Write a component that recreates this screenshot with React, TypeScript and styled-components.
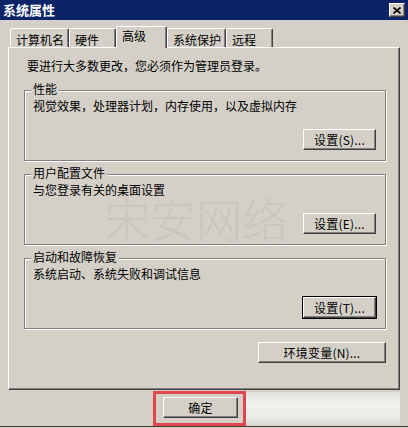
import React from "react";
import styled, { createGlobalStyle } from "styled-components";

const GlobalStyle = createGlobalStyle`
  html, body {
    margin: 0;
    padding: 0;
    background: #d4d0c8;
  }
  body {
    font-family: "Noto Sans CJK SC", "Noto Sans", sans-serif;
    font-size: 12px;
    color: #000;
  }
`;

const Window = styled.div`
  width: 408px;
  height: 428px;
  background: #d4d0c8;
  display: flex;
  flex-direction: column;
  overflow: hidden;
  box-sizing: border-box;
`;

const TitleBar = styled.div`
  height: 20px;
  background: #0b2468;
  display: flex;
  align-items: center;
  justify-content: space-between;
  padding: 0 3px 0 3px;
  flex-shrink: 0;
`;

const TitleText = styled.span`
  color: #fff;
  font-size: 13px;
  font-weight: 700;
  line-height: 20px;
`;

const CloseButton = styled.div`
  width: 16px;
  height: 14px;
  box-sizing: border-box;
  background: #d4d0c8;
  border-top: 1px solid #fff;
  border-left: 1px solid #fff;
  border-right: 1px solid #404040;
  border-bottom: 1px solid #404040;
  box-shadow: inset -1px -1px 0 #808080;
  display: flex;
  align-items: center;
  justify-content: center;
`;

const TabRow = styled.div`
  display: flex;
  align-items: flex-end;
  height: 21px;
  margin-top: 6px;
  padding-left: 10px;
  position: relative;
  z-index: 2;
`;

const Tab = styled.div<{ $w: number; $active?: boolean }>`
  width: ${(p) => p.$w}px;
  height: ${(p) => (p.$active ? 22 : 19)}px;
  margin-bottom: ${(p) => (p.$active ? -1 : 0)}px;
  box-sizing: border-box;
  padding: ${(p) => (p.$active ? "2px 0 0 5px" : "4px 0 0 5px")};
  background: #d4d0c8;
  border-top: 1px solid #fff;
  border-left: 1px solid #fff;
  border-right: 1px solid #404040;
  box-shadow: inset -1px 0 0 #808080;
  border-radius: 2px 2px 0 0;
  font-size: 12px;
  line-height: 14px;
  white-space: nowrap;
`;

const Panel = styled.div`
  position: relative;
  margin: 0 8px;
  height: 343px;
  box-sizing: border-box;
  border-top: 1px solid #fff;
  border-left: 1px solid #fff;
  border-right: 1px solid #404040;
  border-bottom: 1px solid #404040;
  box-shadow: inset -1px -1px 0 #808080;
  padding: 11px 13px 0 15px;
  display: flex;
  flex-direction: column;
  flex-shrink: 0;
`;

const Intro = styled.div`
  line-height: 14px;
  margin-left: 3px;
  white-space: nowrap;
`;

const Group = styled.div<{ $first?: boolean }>`
  position: relative;
  height: 71px;
  box-sizing: border-box;
  margin-top: ${(p) => (p.$first ? 17 : 13)}px;
  border: 1px solid #808080;
  box-shadow: 1px 1px 0 #fff, inset 1px 1px 0 #fff;
  padding: 8px 9px 0 8px;
  display: flex;
  flex-direction: column;
`;

const Legend = styled.span`
  position: absolute;
  top: -9px;
  left: 6px;
  padding: 0 2px;
  background: #d4d0c8;
  line-height: 14px;
  white-space: nowrap;
`;

const Desc = styled.div`
  line-height: 14px;
  white-space: nowrap;
`;

const ButtonRow = styled.div<{ $top: number }>`
  display: flex;
  justify-content: flex-end;
  margin-top: ${(p) => p.$top}px;
`;

const Button = styled.div<{ $w: number; $focused?: boolean }>`
  width: ${(p) => p.$w}px;
  height: 21px;
  box-sizing: border-box;
  background: #d4d0c8;
  border-top: 1px solid #fff;
  border-left: 1px solid #fff;
  border-right: 1px solid #404040;
  border-bottom: 1px solid #404040;
  box-shadow: inset -1px -1px 0 #808080
    ${(p) => (p.$focused ? ", 0 0 0 1px #000" : "")};
  display: flex;
  align-items: center;
  justify-content: center;
  font-size: 12px;
  line-height: 14px;
  white-space: nowrap;
  letter-spacing: 0.2px;
`;

const Watermark = styled.div`
  position: absolute;
  left: 95px;
  top: 146px;
  font-size: 46px;
  line-height: 46px;
  font-weight: 300;
  color: #cac6be;
  white-space: nowrap;
  pointer-events: none;
`;

const Footer = styled.div`
  height: 37px;
  box-sizing: border-box;
  border-bottom: 1px solid #404040;
  display: flex;
  align-items: flex-start;
  padding-left: 153px;
  flex-shrink: 0;
`;

const Highlight = styled.div`
  width: 93px;
  height: 35px;
  margin-top: 1px;
  box-sizing: border-box;
  border: 3px solid #e0474c;
  padding: 3px 0 0 7px;
  position: relative;
  z-index: 1;
`;

const Smudge = styled.div`
  width: 154px;
  height: 33px;
  margin-top: 2px;
  background: linear-gradient(180deg, #e2e0dc 0%, #f1f0ed 35%, #eeede9 70%, #dcdad5 100%);
`;

const tabs = [
  { label: "计算机名", w: 59 },
  { label: "硬件", w: 47 },
  { label: "高级", w: 51, active: true },
  { label: "系统保护", w: 59 },
  { label: "远程", w: 47 },
];

const groups = [
  { title: "性能", desc: "视觉效果，处理器计划，内存使用，以及虚拟内存", btn: "设置(S)..." },
  { title: "用户配置文件", desc: "与您登录有关的桌面设置", btn: "设置(E)..." },
  { title: "启动和故障恢复", desc: "系统启动、系统失败和调试信息", btn: "设置(T)...", focused: true },
];

export default function App() {
  return (
    <>
      <GlobalStyle />
      <Window>
        <TitleBar>
          <TitleText>系统属性</TitleText>
          <CloseButton>
            <svg width="8" height="7" viewBox="0 0 8 7">
              <path d="M0.5 0.5 L7.5 6.5 M7.5 0.5 L0.5 6.5" stroke="#000" strokeWidth="1.6" />
            </svg>
          </CloseButton>
        </TitleBar>
        <TabRow>
          {tabs.map((t) => (
            <Tab key={t.label} $w={t.w} $active={t.active}>
              {t.label}
            </Tab>
          ))}
        </TabRow>
        <Panel>
          <Intro>要进行大多数更改，您必须作为管理员登录。</Intro>
          {groups.map((g, i) => (
            <Group key={g.title} $first={i === 0}>
              <Legend>{g.title}</Legend>
              <Desc>{g.desc}</Desc>
              <ButtonRow $top={16}>
                <Button $w={73} $focused={g.focused}>{g.btn}</Button>
              </ButtonRow>
            </Group>
          ))}
          <ButtonRow $top={13}>
            <Button $w={128}>环境变量(N)...</Button>
          </ButtonRow>
          <Watermark>宋安网络</Watermark>
        </Panel>
        <Footer>
          <Highlight>
            <Button $w={75}>确定</Button>
          </Highlight>
          <Smudge />
        </Footer>
      </Window>
    </>
  );
}
